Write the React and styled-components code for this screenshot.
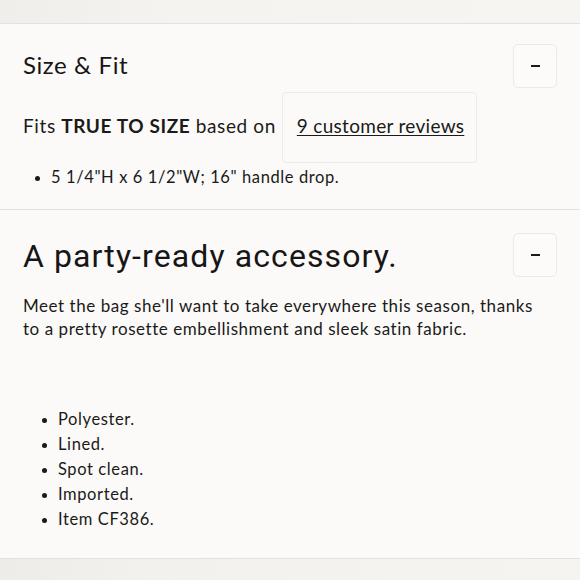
import React from "react";
import styled, { createGlobalStyle } from "styled-components";

const GlobalStyle = createGlobalStyle`
  body {
    margin: 0;
    background: #fcfaf8;
    color: #1a1a1a;
    font-family: "Lato", "Noto Sans", sans-serif;
  }
`;

const Page = styled.div`
  width: 580px;
  height: 580px;
  overflow: hidden;
  display: flex;
  flex-direction: column;
`;

const Strip = styled.div`
  height: 23px;
  flex-shrink: 0;
  background: linear-gradient(90deg, #f0eeeb 0%, #f5f3f0 30%, #f7f5f2 100%);
  border-bottom: 1px solid #e3e0dd;
`;

const Section = styled.section`
  padding: ${(p) => p.$pad || "20px 23px 0"};
  border-bottom: 1px solid #e3e0dd;
  height: ${(p) => p.$height}px;
  box-sizing: border-box;
  flex-shrink: 0;
`;

const Header = styled.div`
  display: flex;
  align-items: center;
  justify-content: space-between;
`;

const Title = styled.h2`
  margin: 0;
  font-weight: 400;
  font-family: ${(p) => (p.$big ? '"Roboto", sans-serif' : '"Lato", sans-serif')};
  font-size: ${(p) => (p.$big ? 32 : 24)}px;
  letter-spacing: ${(p) => (p.$big ? "1.1px" : "0.6px")};
  color: #161616;
  margin-top: ${(p) => (p.$big ? "2px" : "-3px")};
`;

const Toggle = styled.button`
  width: 44px;
  height: 44px;
  border: 1px solid #ece9e6;
  border-radius: 5px;
  background: #fcfbfa;
  display: flex;
  align-items: center;
  justify-content: center;
  padding: 0;
  &::before {
    content: "";
    width: 9px;
    height: 2px;
    background: #1a1a1a;
  }
`;

const FitRow = styled.div`
  display: flex;
  align-items: center;
  margin-top: 4px;
  font-size: 19px;
  letter-spacing: 0.6px;
`;

const FitText = styled.span`
  margin-right: 6px;
  margin-top: -4px;
  b {
    font-weight: 700;
  }
`;

const ReviewBox = styled.div`
  height: 69px;
  padding: 0 12px 0 14px;
  border: 1px solid #eeebe8;
  border-radius: 4px;
  display: flex;
  align-items: center;
  a {
    color: #1a1a1a;
    letter-spacing: 0.3px;
    text-decoration: underline;
    text-underline-offset: 2px;
    text-decoration-thickness: 1px;
    margin-top: -4px;
  }
`;

const List = styled.ul`
  margin: ${(p) => p.$margin || "0"};
  padding-left: ${(p) => p.$indent}px;
  font-size: 16.5px;
  line-height: 25px;
  letter-spacing: 0.6px;
  li::marker {
    font-size: 14px;
  }
`;

const Paragraph = styled.p`
  margin: 18px 0 0;
  max-width: 525px;
  font-size: 17px;
  line-height: 22.5px;
  letter-spacing: 0.55px;
`;

const BottomStrip = styled.div`
  flex: 1;
  background: linear-gradient(90deg, #eeece9 0%, #f3f1ee 25%, #f6f4f1 100%);
`;

export default function App() {
  return (
    <Page>
      <GlobalStyle />
      <Strip />
      <Section $height={186}>
        <Header>
          <Title>Size &amp; Fit</Title>
          <Toggle aria-label="Collapse" />
        </Header>
        <FitRow>
          <FitText>
            Fits <b>TRUE TO SIZE</b> based on
          </FitText>
          <ReviewBox>
            <a href="#reviews">9 customer reviews</a>
          </ReviewBox>
        </FitRow>
        <List $indent={28} $margin="2px 0 0">
          <li>5 1/4"H x 6 1/2"W; 16" handle drop.</li>
        </List>
      </Section>
      <Section $height={349} $pad="23px 23px 0">
        <Header>
          <Title $big>A party-ready accessory.</Title>
          <Toggle aria-label="Collapse" />
        </Header>
        <Paragraph>
          Meet the bag she'll want to take everywhere this season, thanks to a
          pretty rosette embellishment and sleek satin fabric.
        </Paragraph>
        <List $indent={35} $margin="67px 0 0">
          <li>Polyester.</li>
          <li>Lined.</li>
          <li>Spot clean.</li>
          <li>Imported.</li>
          <li>Item CF386.</li>
        </List>
      </Section>
      <BottomStrip />
    </Page>
  );
}
